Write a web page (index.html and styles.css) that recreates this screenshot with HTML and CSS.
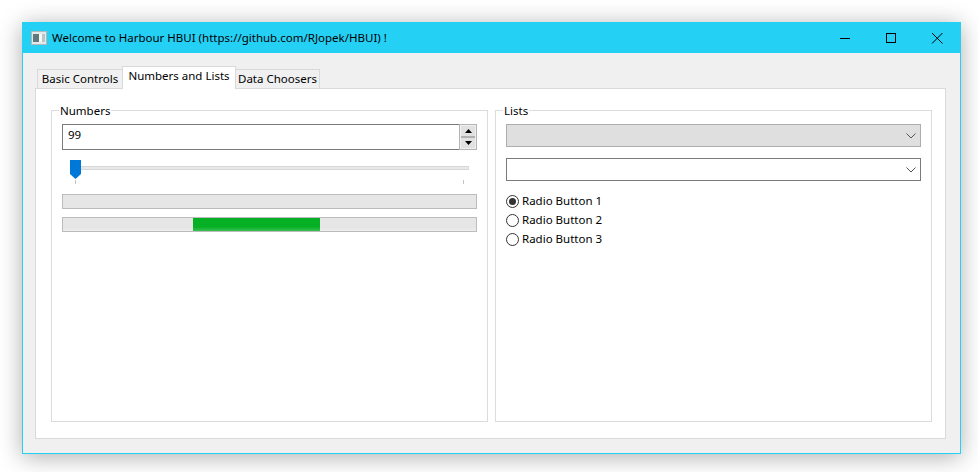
FILE: index.html
```html
<!DOCTYPE html>
<html lang="en">
<head>
<meta charset="utf-8">
<title>Welcome to Harbour HBUI</title>
<link rel="stylesheet" href="styles.css">
</head>
<body>
<div class="window">
  <header class="titlebar">
    <svg class="app-icon" width="16" height="14" viewBox="0 0 16 14">
      <rect x="0.5" y="0.5" width="15" height="13" fill="#e4e8e8" stroke="#b4b8b8"/>
      <rect x="2" y="3" width="6" height="8" fill="#5f7a7c"/>
      <rect x="8" y="3" width="3" height="8" fill="#f6f8f8"/>
      <rect x="11" y="3" width="3" height="8" fill="#b9c6c6"/>
    </svg>
    <span class="title">Welcome to Harbour HBUI (https://github.com/RJopek/HBUI) !</span>
    <div class="controls">
      <svg class="ctl" width="46" height="30" viewBox="0 0 46 30"><path d="M18 15.5h10" stroke="#000" fill="none"/></svg>
      <svg class="ctl" width="46" height="30" viewBox="0 0 46 30"><rect x="18.5" y="10.5" width="9" height="9" stroke="#000" fill="none"/></svg>
      <svg class="ctl" width="46" height="30" viewBox="0 0 46 30"><path d="M18 10l10.5 10.5M28.5 10L18 20.5" stroke="#000" fill="none"/></svg>
    </div>
  </header>
  <main class="client">
    <div class="tabs">
      <div class="tab">Basic Controls</div>
      <div class="tab tab-active">Numbers and Lists</div>
      <div class="tab tab-third">Data Choosers</div>
    </div>
    <section class="pane">
      <fieldset class="group">
        <legend>Numbers</legend>
        <div class="spinner">
          <span class="spin-value">99</span>
          <div class="spin-buttons">
            <div class="spin-btn"><svg width="7" height="4" viewBox="0 0 7 4"><path d="M3.5 0L7 4H0z" fill="#000"/></svg></div>
            <div class="spin-btn spin-btn-down"><svg width="7" height="4" viewBox="0 0 7 4"><path d="M0 0h7L3.5 4z" fill="#000"/></svg></div>
          </div>
        </div>
        <div class="slider">
          <div class="groove"></div>
          <svg class="thumb" width="11" height="19" viewBox="0 0 11 19"><path d="M0 0h11v14l-5.5 5L0 14z" fill="#0078d7"/></svg>
          <div class="tick tick-start"></div>
          <div class="tick tick-end"></div>
        </div>
        <div class="progress progress-first"></div>
        <div class="progress progress-second"><div class="chunk"></div></div>
      </fieldset>
      <fieldset class="group">
        <legend>Lists</legend>
        <div class="combo combo-disabled">
          <svg width="10" height="6" viewBox="0 0 10 6"><path d="M0.5 0.5L5 5l4.5-4.5" fill="none" stroke="#555"/></svg>
        </div>
        <div class="combo combo-enabled">
          <svg width="10" height="6" viewBox="0 0 10 6"><path d="M0.5 0.5L5 5l4.5-4.5" fill="none" stroke="#555"/></svg>
        </div>
        <div class="radios">
          <div class="radio-row"><span class="radio radio-on"><span class="dot"></span></span><span class="radio-label">Radio Button 1</span></div>
          <div class="radio-row"><span class="radio"></span><span class="radio-label">Radio Button 2</span></div>
          <div class="radio-row"><span class="radio"></span><span class="radio-label">Radio Button 3</span></div>
        </div>
      </fieldset>
    </section>
  </main>
</div>
</body>
</html>
```

FILE: styles.css
```css
* { box-sizing: border-box; }
html, body { margin: 0; height: 100%; background: #fff; overflow: hidden; }
body {
  padding: 22px 0 0 22px;
  font-family: "Noto Sans", "Open Sans", sans-serif;
  font-size: 11.5px;
  color: #000;
}
.window {
  width: 939px;
  height: 432px;
  display: flex;
  flex-direction: column;
  border: 1px solid #25d0f5;
  border-top: 0;
  background: #f0f0f0;
  box-shadow: 0 3px 22px rgba(0, 0, 0, 0.32);
}
.titlebar {
  height: 31px;
  flex: none;
  display: flex;
  align-items: center;
  background: #25d0f5;
  padding-left: 8px;
  margin: 0 -1px 0 -1px;
}
.app-icon { flex: none; margin-left: 1px; }
.title { margin-left: 5px; line-height: 16px; white-space: nowrap; }
.controls { margin-left: auto; display: flex; margin-right: 1px; }
.ctl { display: block; }
.client {
  flex: 1;
  display: flex;
  flex-direction: column;
  padding: 13px 14px 14px 12px;
}
.tabs {
  display: flex;
  align-items: flex-end;
  height: 23px;
  margin: 0 0 -1px 2px;
  position: relative;
  z-index: 1;
}
.tab {
  height: 20px;
  width: 85px;
  border: 1px solid #d9d9d9;
  border-right: 0;
  background: #f0f0f0;
  text-align: center;
  line-height: 17px;
  white-space: nowrap;
}
.tab-active {
  height: 23px;
  width: 114px;
  background: #fff;
  border-right: 1px solid #d9d9d9;
  border-bottom: 0;
  line-height: 18px;
}
.tab-third { border-left: 0; border-right: 1px solid #d9d9d9; width: 84px; }
.pane {
  flex: 1;
  min-height: 0;
  display: grid;
  grid-template-columns: 437px 437px;
  column-gap: 7px;
  padding: 13px 13px 16px 15px;
  background: #fff;
  border: 1px solid #d9d9d9;
}
.group {
  margin: 0;
  min-width: 0;
  padding: 6px 10px 0;
  border: 1px solid #dcdcdc;
}
legend {
  margin-left: -3px;
  padding: 1px 1px 0;
  line-height: 15px;
}
.spinner {
  height: 26px;
  display: flex;
  align-items: stretch;
}
.spin-value {
  flex: 1;
  border: 1px solid #7a7a7a;
  border-right: 0;
  padding-left: 5px;
  line-height: 19px;
}
.spin-buttons {
  width: 18px;
  display: flex;
  flex-direction: column;
  border: 1px solid #b4b4b4;
  padding: 1px;
  background: #f0f0f0;
}
.spin-btn {
  flex: 1;
  display: flex;
  align-items: center;
  justify-content: center;
  background: #e1e1e1;
}
.spin-btn-down { border-top: 2px solid #b0b0b0; }
.slider { position: relative; height: 24px; margin-top: 10px; }
.groove {
  position: absolute;
  left: 8px;
  right: 8px;
  top: 6px;
  height: 4px;
  background: #e7eaea;
  border: 1px solid #d6d6d6;
}
.thumb { position: absolute; left: 8px; top: 0; }
.tick { position: absolute; top: 20px; width: 1px; height: 4px; background: #c4c4c4; }
.tick-start { left: 13px; }
.tick-end { left: 401px; }
.progress {
  height: 15px;
  border: 1px solid #bcbcbc;
  background: #e6e6e6;
}
.progress-first { margin-top: 10px; }
.progress-second { margin-top: 8px; background: linear-gradient(#e6e6e6 75%, #eeeeee 100%); }
.chunk {
  width: 127px;
  height: 100%;
  margin-left: 130px;
  background: linear-gradient(#06b025 0, #06b025 70%, #3cc155 100%);
}
.combo {
  height: 23px;
  display: flex;
  align-items: center;
  justify-content: flex-end;
  padding-right: 3px;
  border: 1px solid #7a7a7a;
}
.combo svg { margin-right: 1px; }
.combo-disabled { background: #dfdfdf; border-color: #adadad; }
.combo-enabled { background: #fff; margin-top: 11px; }
.radios { margin-top: 11px; }
.radio-row { height: 19px; display: flex; align-items: center; white-space: nowrap; }
.radio-label { margin-bottom: 2px; }
.radio {
  width: 13px;
  height: 13px;
  flex: none;
  margin-right: 3px;
  border: 1px solid #333;
  border-radius: 50%;
  background: #fff;
  display: flex;
  align-items: center;
  justify-content: center;
}
.dot { width: 7px; height: 7px; border-radius: 50%; background: #333; }
```
